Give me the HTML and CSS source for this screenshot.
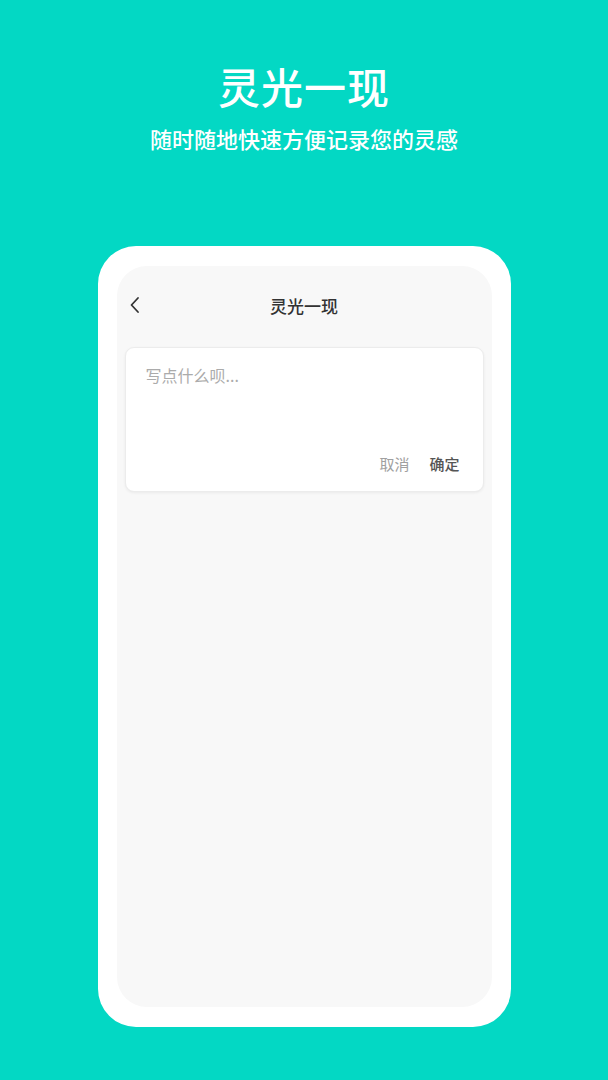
FILE: index.html
```html
<!DOCTYPE html>
<html lang="zh-CN">
<head>
    <meta charset="UTF-8">
    <meta name="viewport" content="width=device-width, initial-scale=1.0">
    <title>灵光一现</title>
    <link rel="stylesheet" href="styles.css">
</head>
<body>
    <div class="page">
        <!-- Promo heading -->
        <div class="promo">
            <h1 class="promo-title">灵光一现</h1>
            <p class="promo-sub">随时随地快速方便记录您的灵感</p>
        </div>

        <!-- Phone mockup -->
        <div class="phone">
            <div class="screen">
                <div class="nav-bar">
                    <span class="back">
                        <svg width="12" height="18" viewBox="0 0 12 18">
                            <path d="M9 2 L2.5 9 L9 16" fill="none" stroke="#333" stroke-width="1.8" stroke-linecap="round" stroke-linejoin="round"/>
                        </svg>
                    </span>
                    <span class="nav-title">灵光一现</span>
                </div>

                <div class="note-card">
                    <div class="note-input">写点什么呗...</div>
                    <div class="note-actions">
                        <span class="btn-cancel">取消</span>
                        <span class="btn-ok">确定</span>
                    </div>
                </div>
            </div>
        </div>
    </div>
</body>
</html>
```

FILE: styles.css
```css
* {
    box-sizing: border-box;
    margin: 0;
    padding: 0;
}

body {
    font-family: "Noto Sans CJK SC", "Noto Sans", sans-serif;
    background: #03d8c4;
    width: 608px;
    height: 1080px;
    overflow: hidden;
}

.page {
    display: flex;
    flex-direction: column;
    align-items: center;
}

/* Promo heading */
.promo {
    padding-top: 56px;
    text-align: center;
    color: #ffffff;
}

.promo-title {
    font-size: 42px;
    font-weight: 500;
    line-height: 60px;
    letter-spacing: 1px;
}

.promo-sub {
    margin-top: 7px;
    font-size: 22px;
    font-weight: 500;
    line-height: 30px;
}

/* Phone mockup */
.phone {
    margin-top: 93px;
    width: 413px;
    height: 781px;
    background: #ffffff;
    border-radius: 38px;
    padding: 20px 19px 20px 19px;
}

.screen {
    height: 100%;
    background: #f8f8f8;
    border-radius: 30px;
    padding: 0 8px;
}

.nav-bar {
    position: relative;
    height: 81px;
    padding-bottom: 2px;
    display: flex;
    align-items: center;
    justify-content: center;
}

.back {
    position: absolute;
    left: 4px;
    top: 30px;
    display: flex;
}

.nav-title {
    font-size: 17px;
    font-weight: 500;
    color: #333333;
}

.note-card {
    background: #ffffff;
    border: 1px solid #ececec;
    border-radius: 9px;
    box-shadow: 0 1px 3px rgba(0,0,0,0.06);
    height: 145px;
    padding: 16px 23px 16px 20px;
    display: flex;
    flex-direction: column;
    justify-content: space-between;
}

.note-input {
    font-size: 16px;
    color: #ababab;
    line-height: 22px;
}

.note-actions {
    display: flex;
    justify-content: flex-end;
    gap: 20px;
    font-size: 15px;
    line-height: 22px;
}

.btn-cancel {
    color: #a0a0a0;
}

.btn-ok {
    color: #555555;
    font-weight: 500;
}
```
